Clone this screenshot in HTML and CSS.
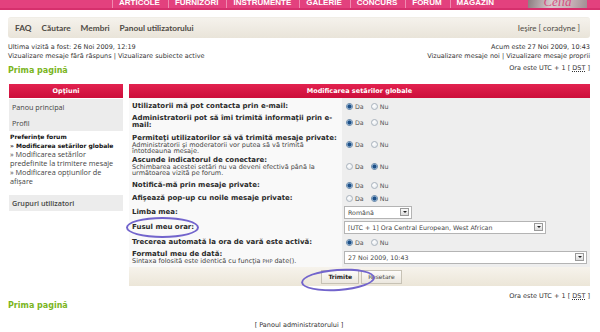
FILE: index.html
```html
<!DOCTYPE html>
<html lang="ro">
<head>
    <meta charset="UTF-8">
    <meta name="viewport" content="width=device-width, initial-scale=1.0">
    <title>Panoul utilizatorului</title>
    <link rel="stylesheet" href="styles.css">
</head>
<body>
    <div class="topbar">
        <ul class="topnav">
            <li>Articole</li>
            <li>Furnizori</li>
            <li>Instrumente</li>
            <li>Galerie</li>
            <li>Concurs</li>
            <li>Forum</li>
            <li>Magazin</li>
        </ul>
        <div class="logo"><span>Celia</span></div>
    </div>

    <div class="page">
        <div class="navbar">
            <div class="navlinks">
                <a href="#">FAQ</a>
                <a href="#">Căutare</a>
                <a href="#">Membri</a>
                <a href="#">Panoul utilizatorului</a>
            </div>
            <div class="navuser">Ieşire [ coradyne ]</div>
        </div>

        <div class="info">
            <div>
                <p>Ultima vizită a fost: 26 Noi 2009, 12:19</p>
                <p><a href="#">Vizualizare mesaje fără răspuns</a> | <a href="#">Vizualizare subiecte active</a></p>
            </div>
            <div class="info-right">
                <p>Acum este 27 Noi 2009, 10:43</p>
                <p><a href="#">Vizualizare mesaje noi</a> | <a href="#">Vizualizare mesaje proprii</a></p>
            </div>
        </div>

        <div class="crumbs">
            <h2>Prima pagină</h2>
            <span class="tz">Ora este UTC + 1 [ <abbr>DST</abbr> ]</span>
        </div>

        <div class="cp">
            <div class="menu">
                <div class="menu-head">Opţiuni</div>
                <div class="menu-item">Panou principal</div>
                <div class="menu-item">Profil</div>
                <div class="menu-sub">
                    <strong>Preferinţe forum</strong>
                    <a href="#" class="active">» Modificarea setărilor globale</a>
                    <a href="#">» Modificarea setărilor predefinite la trimitere mesaje</a>
                    <a href="#">» Modificarea opţiunilor de afişare</a>
                </div>
                <div class="menu-item menu-bold">Grupuri utilizatori</div>
            </div>

            <form class="panel">
                <div class="panel-head">Modificarea setărilor globale</div>
                <table>
                    <tr class="first">
                        <td class="lbl"><b>Utilizatorii mă pot contacta prin e-mail:</b></td>
                        <td class="val"><label><input type="radio" name="r1" checked> Da</label><label><input type="radio" name="r1"> Nu</label></td>
                    </tr>
                    <tr>
                        <td class="lbl"><b>Administratorii pot să îmi trimită informaţii prin e-mail:</b></td>
                        <td class="val"><label><input type="radio" name="r2" checked> Da</label><label><input type="radio" name="r2"> Nu</label></td>
                    </tr>
                    <tr class="spaced">
                        <td class="lbl"><b>Permiteţi utilizatorilor să vă trimită mesaje private:</b><span>Administratorii şi moderatorii vor putea să vă trimită întotdeauna mesaje.</span></td>
                        <td class="val"><label><input type="radio" name="r3" checked> Da</label><label><input type="radio" name="r3"> Nu</label></td>
                    </tr>
                    <tr>
                        <td class="lbl"><b>Ascunde indicatorul de conectare:</b><span>Schimbarea acestei setări nu va deveni efectivă până la următoarea vizită pe forum.</span></td>
                        <td class="val"><label><input type="radio" name="r4"> Da</label><label><input type="radio" name="r4" checked> Nu</label></td>
                    </tr>
                    <tr>
                        <td class="lbl"><b>Notifică-mă prin mesaje private:</b></td>
                        <td class="val"><label><input type="radio" name="r5" checked> Da</label><label><input type="radio" name="r5"> Nu</label></td>
                    </tr>
                    <tr>
                        <td class="lbl"><b>Afişează pop-up cu noile mesaje private:</b></td>
                        <td class="val"><label><input type="radio" name="r6"> Da</label><label><input type="radio" name="r6" checked> Nu</label></td>
                    </tr>
                    <tr class="select-row">
                        <td class="lbl"><b>Limba mea:</b></td>
                        <td class="val"><div class="sel sel-lang"><span>Română</span><i></i></div></td>
                    </tr>
                    <tr class="select-row">
                        <td class="lbl"><b class="ring">Fusul meu orar:</b></td>
                        <td class="val"><div class="sel sel-tz"><span>[UTC + 1] Ora Central European, West African</span><i></i></div></td>
                    </tr>
                    <tr>
                        <td class="lbl"><b>Trecerea automată la ora de vară este activă:</b></td>
                        <td class="val"><label><input type="radio" name="r9" checked> Da</label><label><input type="radio" name="r9"> Nu</label></td>
                    </tr>
                    <tr class="last">
                        <td class="lbl"><b>Formatul meu de dată:</b><span>Sintaxa folosită este identică cu funcţia <small>PHP</small> date().</span></td>
                        <td class="val"><div class="sel sel-date"><span>27 Noi 2009, 10:43</span><i></i></div></td>
                    </tr>
                    <tr>
                        <td class="foot" colspan="2">
                            <button type="button" class="btn btn-main">Trimite</button>
                            <button type="button" class="btn">Resetare</button>
                        </td>
                    </tr>
                </table>
            </form>
        </div>

        <div class="crumbs crumbs-bottom">
            <h2>Prima pagină</h2>
            <span class="tz">Ora este UTC + 1 [ <abbr>DST</abbr> ]</span>
        </div>
        <div class="admin">[ <a href="#">Panoul administratorului</a> ]</div>
    </div>
</body>
</html>
```

FILE: styles.css
```css
body {
    margin: 0;
    font-family: "DejaVu Sans", Verdana, sans-serif;
    font-size: 6.5px;
    color: #333;
    background: #fff;
}

a {
    color: #333;
    text-decoration: none;
}

p {
    margin: 0;
}

/* pink site bar */
.topbar {
    height: 8px;
    background: #e3417e;
    border-bottom: 2px solid #d6306d;
    display: flex;
    overflow: hidden;
}

.topnav {
    list-style: none;
    margin: -1px 0 0 0;
    padding: 0 0 0 112px;
    display: flex;
    font-family: "Liberation Sans", Arial, sans-serif;
    font-weight: bold;
    font-size: 8px;
    line-height: 8px;
    color: #fff;
    text-transform: uppercase;
}

.topnav li {
    padding: 0 8px 0 6px;
    border-left: 1px solid #f08ab0;
}

.logo {
    margin-left: auto;
    margin-right: 13px;
    width: 59px;
    background: linear-gradient(100deg, #8c7d80, #d9cdd0 40%, #c9b4ba 70%, #a08f93);
    text-align: center;
}

.logo span {
    display: block;
    margin-top: -6px;
    font-family: "Liberation Serif", serif;
    font-style: italic;
    font-size: 13px;
    color: #d64f80;
}

.page {
    padding: 0 10px 0 8px;
}

/* user nav bar */
.navbar {
    margin-top: 7px;
    height: 20px;
    display: flex;
    justify-content: space-between;
    align-items: center;
    padding: 0 10px 0 7px;
    background: linear-gradient(#f5f2ec, #e9e4d9);
    border-top: 1px solid #f0ede6;
    border-radius: 3px;
    font-family: Lato, "Open Sans", sans-serif;
    font-size: 8px;
    color: #4e4a44;
}

.navlinks {
    display: flex;
    gap: 10px;
    font-weight: bold;
    font-size: 8.3px;
}

.navlinks a {
    color: #4e4a44;
}

.info {
    display: flex;
    justify-content: space-between;
    margin-top: 5px;
    line-height: 8.5px;
}

.info-right {
    text-align: right;
}

.crumbs {
    display: flex;
    justify-content: space-between;
    align-items: flex-start;
    margin-top: 4px;
    height: 16px;
    margin-bottom: 4px;
}

h2 {
    margin: 2px 0 0 0;
    font-size: 8px;
    line-height: 10px;
    color: #7ab51d;
}

.tz {
    line-height: 8px;
}

abbr {
    text-decoration: underline dotted;
}

/* control panel */
.cp {
    display: grid;
    grid-template-columns: 115px 1fr;
    column-gap: 6px;
}

.menu-head, .panel-head {
    height: 14px;
    line-height: 14px;
    background: linear-gradient(#e2224f, #cc0e3a);
    color: #fff;
    font-weight: bold;
    font-size: 6.5px;
    text-align: center;
}

.menu-head {
    margin-left: 1px;
    margin-bottom: 1px;
}

.menu-item {
    height: 16px;
    line-height: 16px;
    padding-left: 3px;
    margin-left: 1px;
    background: #ececec;
    font-family: "Open Sans", sans-serif;
    font-size: 7.2px;
    color: #444;
}

.menu-bold {
    font-weight: 600;
}

.menu-sub {
    display: flex;
    flex-direction: column;
    padding: 1px 6px 9px 2px;
    font-family: "Open Sans", sans-serif;
    font-size: 7.3px;
    line-height: 9px;
    color: #444;
}

.menu-sub strong, .menu-sub .active {
    font-family: "DejaVu Sans", Verdana, sans-serif;
    font-size: 6px;
    font-weight: bold;
    color: #111;
}

.menu-sub a {
    color: #444;
}

.panel table {
    width: 100%;
    border-collapse: collapse;
}

.panel td {
    padding: 2px 3px;
    vertical-align: middle;
}

.panel .first td {
    padding-top: 4px;
}

.panel .spaced td {
    padding-top: 3.5px;
    padding-bottom: 0;
}

.panel .select-row td {
    padding-top: 1px;
    padding-bottom: 1px;
}

.panel .select-row + .select-row td {
    padding-bottom: 2px;
}

.panel .last td {
    padding-bottom: 3px;
}

.lbl {
    width: 208px;
    background: #f9f9f9;
}

.lbl b {
    display: block;
    font-size: 7px;
    line-height: 7px;
    color: #2b2b2b;
}

.lbl span {
    display: block;
    font-size: 6.5px;
    line-height: 6.5px;
    color: #444;
}

.lbl small {
    font-size: 5px;
}

.val {
    background: #eeeeee;
    color: #555;
    font-size: 6.3px;
    line-height: 9px;
    padding-left: 4px !important;
}

.val label {
    margin-right: 7px;
}

input[type="radio"] {
    appearance: none;
    -webkit-appearance: none;
    width: 7px;
    height: 7px;
    margin: 0;
    vertical-align: -1px;
    border: 1px solid #a9b3bd;
    border-radius: 50%;
    background: radial-gradient(circle at 40% 35%, #fff, #dfe4ea);
}

input[type="radio"]:checked {
    border-color: #6c8aa8;
    background: radial-gradient(circle, #1d4f86 0 1.6px, #7fa7cf 2.2px, #fff 2.8px);
}

.sel {
    display: inline-flex;
    justify-content: space-between;
    align-items: center;
    box-sizing: border-box;
    height: 13px;
    padding: 0 2px 0 3px;
    margin-left: -2px;
    background: #fff;
    border: 1px solid #b4b4b4;
    color: #444;
    vertical-align: middle;
}

.sel i {
    width: 9px;
    height: 8px;
    box-sizing: border-box;
    border: 1px solid #9a9a9a;
    background: linear-gradient(#fafafa, #dcdcdc);
    display: flex;
    justify-content: center;
    align-items: center;
}

.sel i::before {
    content: "";
    border-left: 2px solid transparent;
    border-right: 2px solid transparent;
    border-top: 2px solid #222;
}

.sel-lang { width: 68px; }
.sel-tz { width: 202px; }
.sel-date { width: 243px; }

.foot {
    height: 15px;
    text-align: center;
    background: linear-gradient(#f6f3ec, #ece6d8);
}

.btn {
    height: 14px;
    padding: 0 6px;
    font-family: "DejaVu Sans", Verdana, sans-serif;
    font-size: 6px;
    color: #444;
    background: linear-gradient(#fdfcfa, #ebe7de);
    border: 1px solid #c7c2b5;
    cursor: pointer;
}

.btn-main {
    font-weight: bold;
    color: #222;
    position: relative;
    margin-left: 4px;
}

/* hand-drawn highlight marks */
.ring {
    position: relative;
    display: inline-block !important;
}

.ring::after, .btn-main::after {
    content: "";
    position: absolute;
    border: 2px solid #7264cc;
    border-radius: 50%;
}

.ring::after {
    left: -6px;
    right: -5px;
    top: -7px;
    bottom: -7px;
}

.btn-main::after {
    left: -21px;
    right: -17px;
    top: -2px;
    bottom: -8px;
    transform: rotate(-4deg);
}

.crumbs-bottom {
    margin-top: 6px;
    height: 20px;
}

.crumbs-bottom h2 {
    margin-top: 9px;
}

.admin {
    text-align: center;
    margin-top: 9px;
}
```
